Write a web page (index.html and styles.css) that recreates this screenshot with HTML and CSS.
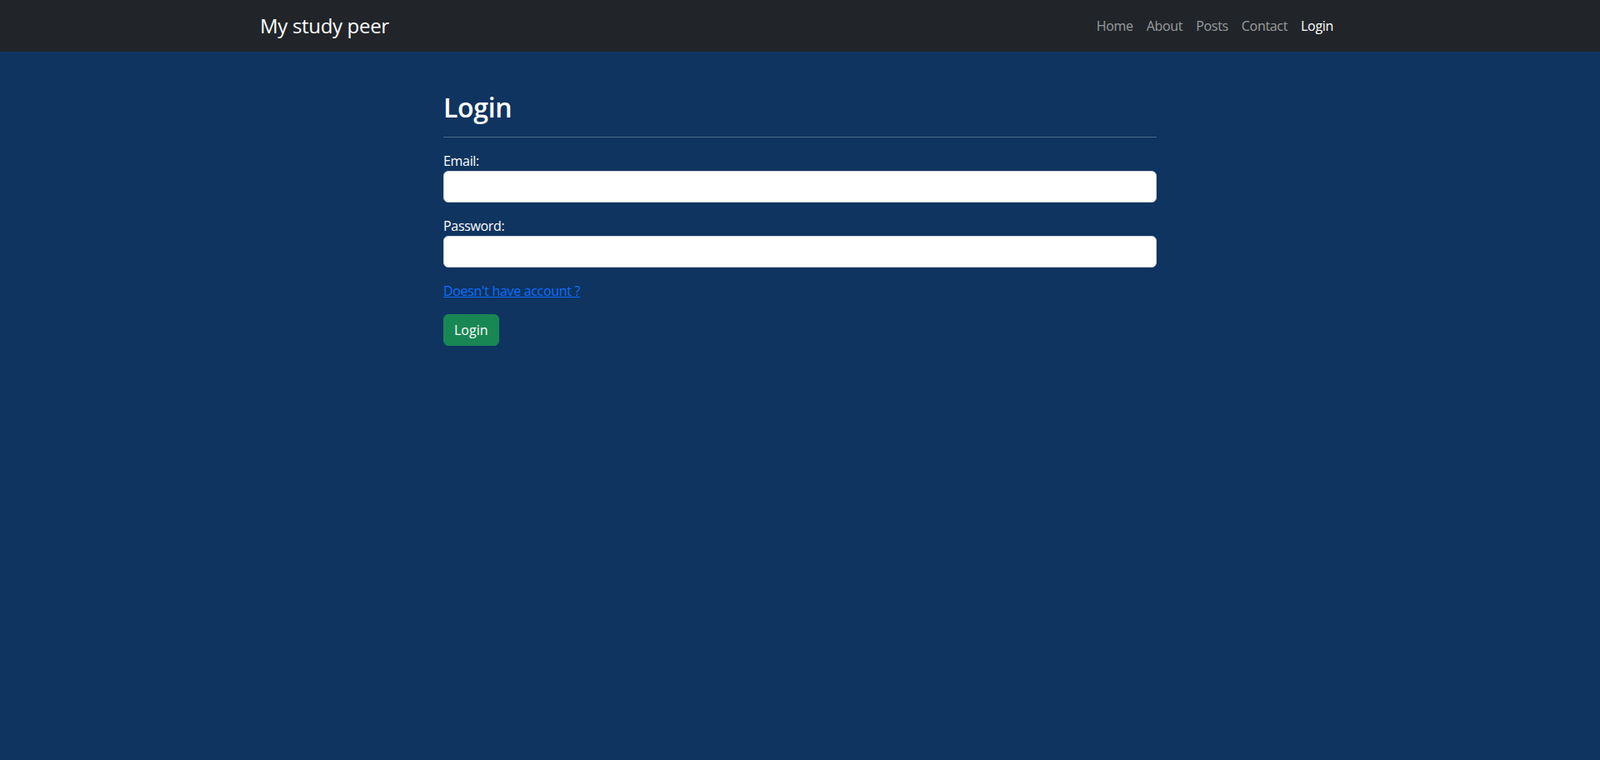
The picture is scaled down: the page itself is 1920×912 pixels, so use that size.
FILE: index.html
```html
<!DOCTYPE html>
<html lang="en">
<head>
<meta charset="utf-8">
<title>Login - My study peer</title>
<link rel="stylesheet" href="styles.css">
</head>
<body>
<nav class="navbar">
  <div class="nav-container">
    <a class="brand" href="#">My study peer</a>
    <ul class="nav-links">
      <li><a class="nav-link" href="#">Home</a></li>
      <li><a class="nav-link" href="#">About</a></li>
      <li><a class="nav-link" href="#">Posts</a></li>
      <li><a class="nav-link" href="#">Contact</a></li>
      <li><a class="nav-link active" href="#">Login</a></li>
    </ul>
  </div>
</nav>
<main class="main">
  <div class="login-box">
    <h2 class="title">Login</h2>
    <hr class="divider">
    <form class="login-form">
      <div class="field">
        <label class="field-label" for="email">Email:</label>
        <input class="field-input" type="email" id="email">
      </div>
      <div class="field">
        <label class="field-label" for="password">Password:</label>
        <input class="field-input" type="password" id="password">
      </div>
      <div class="field">
        <a class="signup-link" href="#">Doesn't have account ?</a>
      </div>
      <button class="btn-login" type="button">Login</button>
    </form>
  </div>
</main>
</body>
</html>
```

FILE: styles.css
```css
* {
  box-sizing: border-box;
}

html, body {
  margin: 0;
  padding: 0;
  height: 100%;
}

body {
  background: #0f3460;
  color: #ffffff;
  font-family: "Segoe UI", "Open Sans", sans-serif;
  font-size: 16px;
  line-height: 24px;
  letter-spacing: -0.02em;
}

.navbar {
  background: #212529;
  padding: 8px 0;
}

.nav-container {
  max-width: 1320px;
  margin: 0 auto;
  padding: 0 12px;
  display: flex;
  align-items: center;
  justify-content: space-between;
}

.brand {
  color: #ffffff;
  text-decoration: none;
  font-size: 24px;
  line-height: 36px;
  padding: 5px 0;
}

.nav-links {
  list-style: none;
  margin: 0;
  padding: 0;
  display: flex;
}

.nav-link {
  display: block;
  padding: 8px;
  color: rgba(255, 255, 255, 0.55);
  text-decoration: none;
  line-height: 24px;
}

.nav-link.active {
  color: #ffffff;
}

.main {
  padding-top: 48px;
}

.login-box {
  width: 856px;
  margin: 0 auto;
}

.title {
  margin: 0;
  font-size: 32px;
  line-height: 38.4px;
  font-weight: 600;
}

.divider {
  margin: 16px 0 16px;
  border: 0;
  border-top: 1px solid rgba(255, 255, 255, 0.25);
}

.login-form {
  display: flex;
  flex-direction: column;
  align-items: flex-start;
}

.field {
  width: 100%;
  margin-bottom: 16px;
}

.field-label {
  display: block;
  line-height: 24px;
}

.field-input {
  display: block;
  width: 100%;
  height: 38px;
  padding: 6px 12px;
  font: inherit;
  color: #212529;
  background: #ffffff;
  border: 1px solid #ced4da;
  border-radius: 6px;
}

.signup-link {
  color: #0d6efd;
  text-decoration: underline;
}

.btn-login {
  font: inherit;
  line-height: 24px;
  color: #ffffff;
  background: #198754;
  border: 1px solid #198754;
  border-radius: 6px;
  padding: 6px 12px;
  cursor: pointer;
}
```
